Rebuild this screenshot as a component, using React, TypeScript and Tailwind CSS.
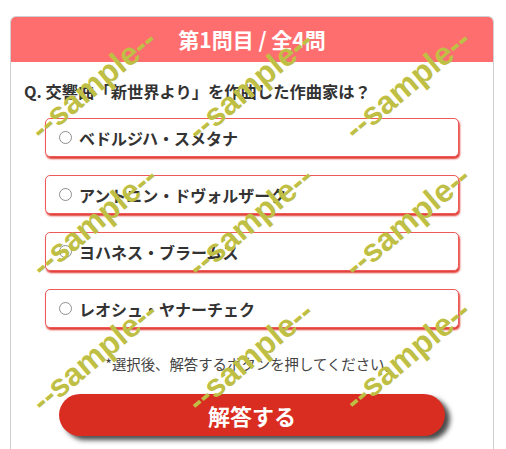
import React from "react";

const options = [
  "ベドルジハ・スメタナ",
  "アントニン・ドヴォルザーク",
  "ヨハネス・ブラームス",
  "レオシュ・ヤナーチェク",
];

const marks = [
  "left-[93px] top-[84px]",
  "left-[250px] top-[85px]",
  "left-[407px] top-[84px]",
  "left-[94px] top-[221px]",
  "left-[250px] top-[221px]",
  "left-[407px] top-[221px]",
  "left-[94px] top-[356px]",
  "left-[250px] top-[356px]",
  "left-[407px] top-[355px]",
];

function Option({ label }: { label: string }) {
  return (
    <label className="flex h-[39px] items-center gap-[7px] rounded-[5px] border border-[#ee5a5a] bg-white pl-[13px] shadow-[1px_2px_2px_#e03a32] cursor-pointer">
      <span className="h-[13px] w-[13px] rounded-full border border-[#8f8f8f] bg-white" />
      <span className="text-[16px] font-bold leading-6 text-[#333]">{label}</span>
    </label>
  );
}

export default function App() {
  return (
    <div
      className="relative h-[449px] w-[506px] overflow-hidden bg-white"
      style={{ fontFamily: '"Noto Sans CJK JP", "Noto Sans", sans-serif' }}
    >
      <div className="px-[10px] pt-4">
        <div className="h-[440px] w-[484px] rounded-t-[6px] border border-b-0 border-[#cfcfcf]">
          <div className="flex h-[45px] items-center justify-center rounded-t-[5px] bg-[#ff6e6e] text-[21px] font-bold text-white">
            第1問目 / 全4問
          </div>

          <p className="pl-[13px] pt-[17px] text-[16.3px] font-bold leading-6 text-[#333]">
            Q. 交響曲「新世界より」を作曲した作曲家は？
          </p>

          <div className="mx-[34px] mt-[15px] flex flex-col gap-[18px]">
            {options.map((o) => (
              <Option key={o} label={o} />
            ))}
          </div>

          <p className="mt-[26px] text-center text-[14.4px] leading-5 text-[#444]">
            *選択後、解答するボタンを押してください。
          </p>

          <button className="mx-[48px] mt-[20px] flex h-[42px] w-[386px] items-center justify-center rounded-full bg-[#da2d21] text-[22px] font-bold text-white shadow-[5px_4px_5px_#4a4a4a]">
            解答する
          </button>
        </div>
      </div>

      <div className="pointer-events-none absolute inset-0">
        {marks.map((m) => (
          <div
            key={m}
            className={`absolute ${m} -translate-x-1/2 -translate-y-1/2 -rotate-40 whitespace-nowrap text-[32px] font-bold leading-none text-[#bfbf45]`}
            style={{ fontFamily: '"Liberation Sans", Arial, sans-serif' }}
          >
            --sample--
          </div>
        ))}
      </div>
    </div>
  );
}
